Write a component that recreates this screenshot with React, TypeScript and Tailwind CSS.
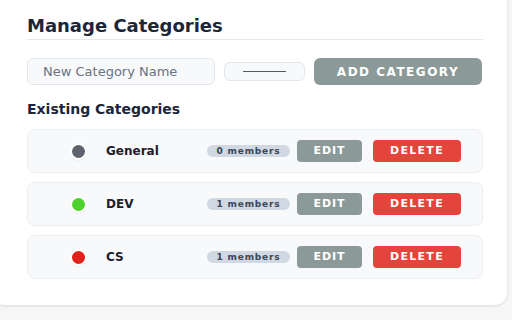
import React from 'react'

const categories = [
  { name: 'General', color: 'bg-[#5f636d]', members: 0 },
  { name: 'DEV', color: 'bg-[#4fd12c]', members: 1 },
  { name: 'CS', color: 'bg-[#e0221b]', members: 1 },
]

function CategoryRow({ name, color, members }: { name: string; color: string; members: number }) {
  return (
    <div className="flex h-[44px] items-center rounded-lg border border-[#eceef1] bg-[#f8f9fb] pl-[44px]">
      <span className={`h-[13px] w-[13px] rounded-full ${color} ring-[2px] ring-white shadow-[0_1px_3px_rgba(0,0,0,0.3)]`} />
      <span className="ml-[21px] w-[101px] text-[12px] font-bold text-[#1a202c]">{name}</span>
      <span className="flex h-[12px] w-[83px] items-center justify-center rounded-full bg-[#cfd8e3] text-[9px] font-bold leading-[10px] tracking-[0.8px] text-[#3b4656]">
        {members} members
      </span>
      <button className="ml-[7px] h-[22px] w-[65px] rounded-[4px] bg-[#8b9a98] text-[11px] font-bold tracking-[1px] text-white">
        EDIT
      </button>
      <button className="ml-[11px] h-[22px] w-[88px] rounded-[4px] bg-[#e3443b] text-[11px] font-bold tracking-[1.3px] text-white">
        DELETE
      </button>
    </div>
  )
}

export default function App() {
  return (
    <div className="h-[320px] w-[512px] overflow-hidden bg-[#f6f6f6] font-['DejaVu_Sans',Arial,sans-serif]">
      <div className="-ml-[8px] -mt-[12px] h-[317px] w-[515px] rounded-xl bg-white pl-[35px] pt-[27px] shadow-[0_1px_3px_rgba(0,0,0,0.12)]">
        <div className="w-[456px]">
          <h2 className="text-[18px] font-bold leading-[22px] text-[#1b2638]">Manage Categories</h2>
          <div className="mt-[2px] border-t border-[#e6e8eb]" />

          <div className="mt-[18px] flex items-center">
            <input
              placeholder="New Category Name"
              className="h-[27px] w-[188px] rounded-[6px] border border-[#e3e6ea] bg-[#f8f9fb] px-[15px] text-[13px] text-[#374151] placeholder:text-[#6b7280] outline-none"
            />
            <div className="ml-[9px] flex h-[19px] w-[81px] items-center justify-center rounded-[6px] border border-[#e3e6ea] bg-[#f8f9fb]">
              <div className="h-[1.5px] w-[43px] bg-[#555a60]" />
            </div>
            <button className="ml-[9px] h-[27px] w-[168px] rounded-[6px] bg-[#8b9a98] text-[12px] font-bold tracking-[1.5px] text-white">
              ADD CATEGORY
            </button>
          </div>

          <h3 className="mt-[15px] text-[14px] font-bold leading-[18px] text-[#1b2638]">Existing Categories</h3>

          <div className="mt-[11px] flex flex-col gap-[9px]">
            {categories.map((c) => (
              <CategoryRow key={c.name} {...c} />
            ))}
          </div>
        </div>
      </div>
    </div>
  )
}
